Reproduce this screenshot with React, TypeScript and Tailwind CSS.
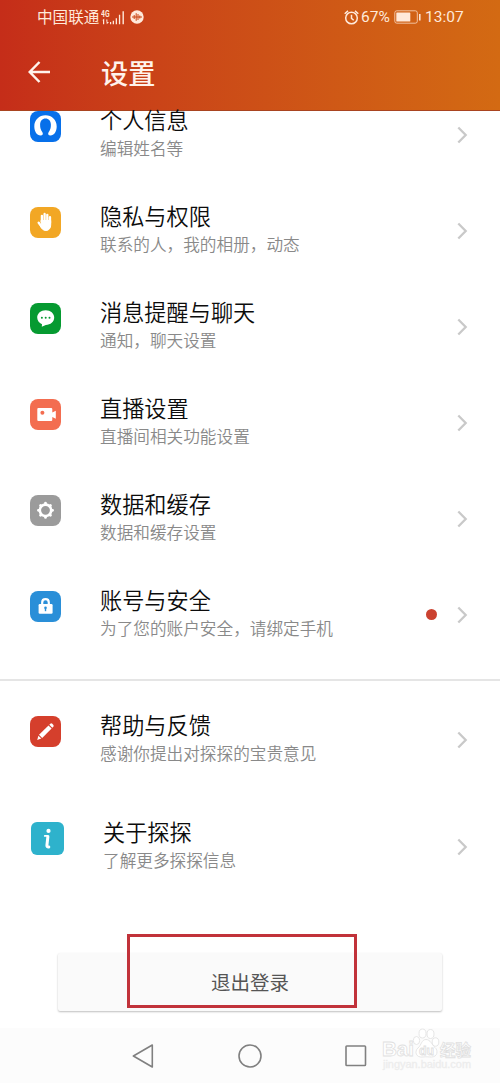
import type { ReactNode } from "react";

interface SettingItem {
  title: string;
  desc: string;
  color: string;
  icon: ReactNode;
  dot?: boolean;
}

// 主要设置项
const mainItems: SettingItem[] = [
  {
    title: "个人信息",
    desc: "编辑姓名等",
    color: "bg-[#0770ea]",
    icon: (
      <path
        fill="#fff"
        d="M10.500 24.500C7 24.500 4.300 20.500 4.300 15.500C4.300 9 9.100 4.300 15.500 4.300S26.700 9 26.700 15.500C26.700 20.500 24 24.500 20.500 24.500C18.200 24.500 17.600 22.800 18.600 21.200C20.300 19 20.900 17 20.900 13.800C20.900 9.800 18.700 7.500 15.500 7.500S10.100 9.800 10.100 13.800C10.100 17 10.700 19 12.400 21.200C13.400 22.800 12.800 24.500 10.500 24.500Z"
      />
    ),
  },
  {
    title: "隐私与权限",
    desc: "联系的人，我的相册，动态",
    color: "bg-[#f2a725]",
    icon: (
      <g fill="none" stroke="#fff" strokeLinecap="round" strokeLinejoin="round">
        <path strokeWidth="2.300" d="M11.900 15V8.800M14.600 14V7M17.300 14V7.800M20 16V10.200" />
        <path strokeWidth="2.400" d="M8.700 15.800L12 20" />
        <path fill="#fff" strokeWidth="1" d="M11.300 13.500H20.700V18C20.700 21 19 23.500 16 23.500C13 23.500 11.500 21.500 10 18.500L11.300 18Z" />
      </g>
    ),
  },
  {
    title: "消息提醒与聊天",
    desc: "通知，聊天设置",
    color: "bg-[#069a31]",
    icon: (
      <>
        <path fill="#fff" d="M15.700 7.200C20.500 7.200 24.200 10.400 24.200 14.600S20.500 22 15.800 22L11.800 23.800L12 21.200C9 20 7.200 17.400 7.200 14.600C7.200 10.400 10.900 7.200 15.700 7.200Z" />
        <g fill="#069a31">
          <circle cx="11.900" cy="14.800" r="1" />
          <circle cx="15.700" cy="14.800" r="1" />
          <circle cx="19.500" cy="14.800" r="1" />
        </g>
      </>
    ),
  },
  {
    title: "直播设置",
    desc: "直播间相关功能设置",
    color: "bg-[#f36d50]",
    icon: (
      <>
        <path fill="#fff" d="M8.300 9H21.200Q22.300 9 22.300 10.200V13.400L25.800 11.700V19.800L22.300 18V20.800Q22.300 22 21.200 22H8.300Q7.300 22 7.300 20.800V10.200Q7.300 9 8.300 9Z" />
        <circle cx="12.400" cy="13.800" r="2" fill="#f36d50" />
      </>
    ),
  },
  {
    title: "数据和缓存",
    desc: "数据和缓存设置",
    color: "bg-[#9b9b9b]",
    icon: (
      <g fill="none" stroke="#fff">
        <circle cx="15.500" cy="15.300" r="5.700" strokeWidth="2.600" />
        <path
          strokeWidth="2.800"
          strokeLinecap="round"
          d="M15.500 8.200V8.800M15.500 21.800V22.400M8.400 15.300H9M22 15.300H22.600M10.600 10.400L11 10.800M20 19.800L20.400 20.200M10.600 20.200L11 19.800M20 10.800L20.400 10.400"
        />
      </g>
    ),
  },
  {
    title: "账号与安全",
    desc: "为了您的账户安全，请绑定手机",
    color: "bg-[#2a8fd8]",
    dot: true,
    icon: (
      <>
        <path fill="none" stroke="#fff" strokeWidth="2.200" d="M12.200 14V11.500C12.200 9.400 13.600 8.200 15.500 8.200S18.800 9.400 18.800 11.500V14" />
        <rect x="8.600" y="13" width="14" height="9.800" rx="1.200" fill="#fff" />
        <circle cx="15.500" cy="16.800" r="1.300" fill="#2a8fd8" />
        <path stroke="#2a8fd8" strokeWidth="1.400" d="M15.500 17V20.200" />
      </>
    ),
  },
];

const helpItem: SettingItem = {
  title: "帮助与反馈",
  desc: "感谢你提出对探探的宝贵意见",
  color: "bg-[#d53f2c]",
  icon: (
    <g fill="#fff">
      <path d="M18.500 9.500L21.600 12.600L12.200 21.900L9 18.800Z" />
      <path d="M19.300 8.700L20.300 7.700Q21.300 7 22.300 7.800L23.400 8.900Q24 9.900 23.300 10.800L22.300 11.800Z" />
      <path d="M8.400 19.700L11.300 22.600L7.200 24.100Z" />
    </g>
  ),
};

const aboutItem: SettingItem = {
  title: "关于探探",
  desc: "了解更多探探信息",
  color: "bg-[#2eb2cc]",
  icon: (
    <g fill="none" stroke="#fff" strokeLinecap="round" strokeLinejoin="round">
      <circle cx="17.500" cy="8.900" r="2.100" fill="#fff" stroke="none" />
      <path strokeWidth="1.800" d="M13.800 13.900H16.400" />
      <path strokeWidth="3" d="M16.900 14.500L15.900 23.300Q15.800 25.300 17.800 25" />
    </g>
  ),
};

function SettingRow({ item, large = false }: { item: SettingItem; large?: boolean }) {
  return (
    <div className={`flex h-24 shrink-0 items-center pr-8 ${large ? "pl-[31px]" : "pl-[30px]"}`}>
      <div className={`mb-[17px] shrink-0 ${large ? "size-[33px] rounded-[6px]" : "size-[31px] rounded-[8px]"} ${item.color}`}>
        <svg viewBox={large ? "0 0 33 33" : "0 0 31 31"} className="size-full">
          {item.icon}
        </svg>
      </div>
      <div className="ml-[39px] flex-1 whitespace-nowrap font-[350]">
        <div className="text-[22.200px] leading-[22px] text-[#0c0c0c]">{item.title}</div>
        <div className="mt-1 text-[16.650px] leading-7 text-[#898989]">{item.desc}</div>
      </div>
      {item.dot && <span className="mb-[2px] mr-[20px] size-[11px] rounded-full bg-[#cb4230]" />}
      <svg viewBox="0 0 11 18" className="h-[18px] w-[11px]" fill="none" stroke="#c9c9c9" strokeWidth="2.300">
        <path d="M1.300 1.500L8.700 9L1.300 16.500" />
      </svg>
    </div>
  );
}

function StatusBar() {
  return (
    <div className="flex h-[34px] items-center pl-[37px] pr-9 text-[#ffe9da]">
      <span className="text-[15.600px] leading-none">中国联通</span>
      {/* 信号 */}
      <svg viewBox="0 0 25 16" className="ml-[2px] h-4 w-[25px]" fill="currentColor">
        <text x="0" y="7.600" fontSize="9.500" fontWeight="700" fontFamily="Roboto, sans-serif" textLength="8.500" lengthAdjust="spacingAndGlyphs">4G</text>
        <path d="M2 11V15.300H3.200V9.500L.5 12ZM5.200 10.500H6.400V13H8L5.800 15.300ZM9 13H10.200V15.300H9ZM11.700 11.700H13V15.300H11.700ZM14.700 9.200H16V15.300H14.700ZM17.900 5.700H19.200V15.300H17.900ZM21.500 2.200H22.900V15.300H21.500Z" />
      </svg>
      <svg viewBox="0 0 14 14" className="ml-[4px] size-[14px]">
        <circle cx="7" cy="7" r="6.700" fill="#ffe9da" />
        <path stroke="#cb4616" strokeWidth="1" d="M2 7H12M4.200 5V9M6.200 3.200V10.800M8 4V10M9.800 5.500V8.500" />
      </svg>
      <div className="ml-auto flex items-center font-[Roboto,sans-serif] text-base leading-none">
        {/* 闹钟 */}
        <svg viewBox="0 0 15 15" className="size-[15px]" fill="none" stroke="currentColor" strokeWidth="1.500">
          <circle cx="7.500" cy="8" r="5.800" />
          <path d="M.7 3.700L4 .9M11 .9L14.300 3.700M7.500 4.800V8.300L9.700 10.200" />
        </svg>
        <span className="ml-[2px] mt-[2px] w-[29px] text-[15.500px]">67%</span>
        {/* 电池 */}
        <svg viewBox="0 0 28 14" className="ml-[4px] h-[14px] w-[28px]">
          <rect x=".8" y=".8" width="22.500" height="12.400" rx="2" fill="none" stroke="currentColor" strokeOpacity=".7" strokeWidth="1" />
          <rect x="2.300" y="2.400" width="14" height="9.200" rx=".6" fill="currentColor" />
          <path stroke="currentColor" strokeWidth="1.500" d="M25.800 4V10.500" />
        </svg>
        <span className="ml-[3px] mt-[2px] w-[39px] text-[15.500px]">13:07</span>
      </div>
    </div>
  );
}

// 右下角水印
function Watermark() {
  return (
    <svg
      viewBox="0 0 100 50"
      className="absolute bottom-[7px] right-[22px] h-[50px] w-[100px]"
      fill="#fff"
      stroke="#e0e0e0"
      strokeWidth=".8"
      fontFamily="'Liberation Sans', 'Noto Sans CJK SC', sans-serif"
    >
      <text x="4" y="30" fontSize="21" fontWeight="700" textLength="32" lengthAdjust="spacingAndGlyphs">Bai</text>
      <ellipse cx="38.500" cy="14.500" rx="3.200" ry="4" />
      <ellipse cx="44.500" cy="7.500" rx="3.500" ry="4.500" />
      <ellipse cx="52.500" cy="8" rx="3.500" ry="4.500" />
      <ellipse cx="57.500" cy="16" rx="3.300" ry="4.200" />
      <path d="M48 13.500C52.500 13.500 54 19 57 21.500C60.500 24.500 59.500 31 53.500 31C50 31 48 30.500 45 31C38 32 36 25.500 40 22C43.500 19 43.500 13.500 48 13.500Z" />
      <text x="41" y="28.500" fontSize="12" fontWeight="700" textLength="15" lengthAdjust="spacingAndGlyphs">du</text>
      <text x="62" y="30" fontSize="15.500" fontWeight="700" textLength="31" lengthAdjust="spacingAndGlyphs">经验</text>
      <text x="5" y="42" fontSize="10" fill="#ededed" stroke="#ededed" strokeWidth=".3" textLength="88" lengthAdjust="spacingAndGlyphs">jingyan.baidu.com</text>
    </svg>
  );
}

export default function App() {
  return (
    <div className="relative flex h-[1083px] w-[500px] flex-col overflow-hidden bg-white font-['Noto_Sans_CJK_SC',sans-serif]">
      <header className="h-[111px] shrink-0 border-b border-[#a94420] bg-gradient-to-r from-[#c52d19] to-[#d36a13]">
        <StatusBar />
        <div className="flex h-[77px] items-center pl-7 text-[#fff3ec]">
          <svg viewBox="0 0 22 22" className="mb-px size-[22px]" fill="none" stroke="currentColor" strokeWidth="2.500">
            <path d="M11.500 1L1.700 11L11.500 21M1.700 11H22" />
          </svg>
          <h1 className="ml-[51px] text-[27.200px] font-medium leading-none">设置</h1>
        </div>
      </header>

      {/* 设置列表 */}
      <main className="flex h-[917px] shrink-0 flex-col">
        <div className="-mt-6 flex shrink-0 flex-col">
          {mainItems.map((item) => (
            <SettingRow key={item.title} item={item} />
          ))}
        </div>
        <div className="mt-4 h-[2px] shrink-0 bg-[#e5e5e5]" />
        <div className="mt-[11px] flex shrink-0 flex-col gap-[11px]">
          <SettingRow item={helpItem} />
          <SettingRow item={aboutItem} large />
        </div>
        <button className="mx-auto mt-[58px] h-[58px] w-[384px] shrink-0 rounded-[2px] bg-[#fafafa] text-[19.500px] text-[#555] shadow-[0_1px_2px_rgba(0,0,0,0.25)]">
          退出登录
        </button>
      </main>

      {/* 系统导航栏 */}
      <nav className="flex h-[55px] shrink-0 items-center justify-between bg-[#fcfcfc] pl-[132px] pr-[132px]">
        <svg viewBox="0 0 24 24" className="size-6" fill="none" stroke="#808080" strokeWidth="1.600" strokeLinejoin="round">
          <path d="M20.300 1L1.400 12L20.300 23Z" />
        </svg>
        <svg viewBox="0 0 24 24" className="size-6" fill="none" stroke="#808080" strokeWidth="1.600">
          <circle cx="12" cy="12" r="11" />
        </svg>
        <svg viewBox="0 0 24 24" className="size-6" fill="none" stroke="#808080" strokeWidth="1.600">
          <rect x="2" y="2" width="19.500" height="19.500" rx=".8" />
        </svg>
      </nav>

      <div className="absolute left-[127px] top-[934px] h-[74px] w-[230px] border-[3px] border-[#c1323a]" />
      <Watermark />
    </div>
  );
}
